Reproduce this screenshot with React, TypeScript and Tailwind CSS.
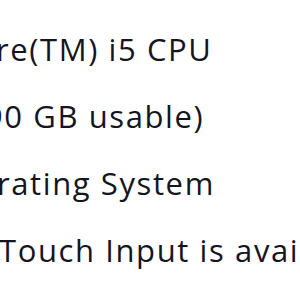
export default function App() {
  return (
    <div className="w-[300px] h-[300px] overflow-hidden bg-white text-[#15151f] font-['Open_Sans',sans-serif] text-[31px] leading-[67px] tracking-[1.6px] whitespace-nowrap pt-[16px]">
      <div className="ml-[-4px]">re(TM) i5 CPU</div>
      <div className="ml-[-15px]">90 GB usable)</div>
      <div className="ml-[-3px]">rating System</div>
      <div className="ml-[-1px]">Touch Input is available</div>
    </div>
  );
}
